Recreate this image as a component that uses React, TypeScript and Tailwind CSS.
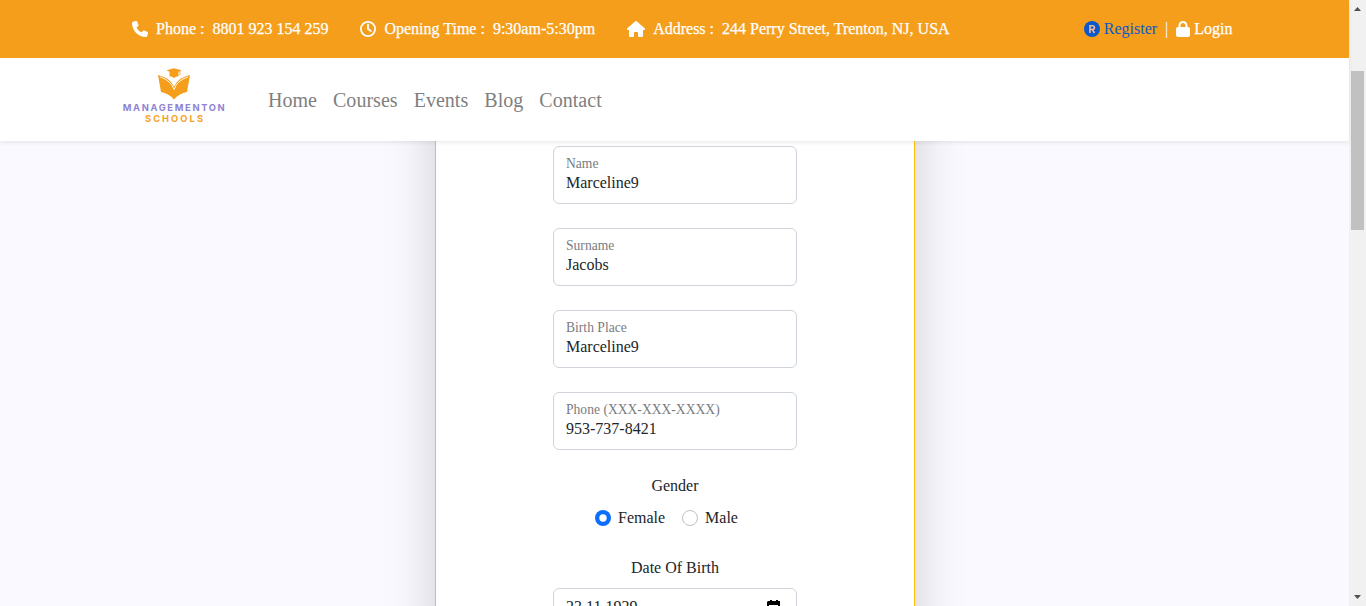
import { FaPhone, FaHouse, FaLock } from "react-icons/fa6";

function ClockIcon({ className }: { className?: string }) {
  return (
    <svg className={className} viewBox="0 0 16 16" fill="none" stroke="currentColor" strokeWidth="1.8">
      <circle cx="8" cy="8" r="7.1" />
      <path d="M8 3.600V8l2.800 1.900" strokeLinecap="round" strokeLinejoin="round" />
    </svg>
  );
}

function RegisterIcon() {
  return (
    <svg width="16" height="16" viewBox="0 0 16 16" fill="none">
      <circle cx="8" cy="8" r="8" fill="currentColor" />
      <path d="M6 12V4.700h2.500a1.900 1.900 0 0 1 0 3.800H6M8.400 8.500l2 3.500" stroke="#f3b9a0" strokeWidth="1.6" />
    </svg>
  );
}

const contacts = [
  { icon: FaPhone, label: "Phone :", value: "8801 923 154 259", box: "w-4" },
  { icon: ClockIcon, label: "Opening Time :", value: "9:30am-5:30pm", box: "w-4" },
  { icon: FaHouse, label: "Address :", value: "244 Perry Street, Trenton, NJ, USA", box: "w-[18px]" },
];

const links = ["Home", "Courses", "Events", "Blog", "Contact"];

const fields = [
  { label: "Name", value: "Marceline9" },
  { label: "Surname", value: "Jacobs" },
  { label: "Birth Place", value: "Marceline9" },
  { label: "Phone (XXX-XXX-XXXX)", value: "953-737-8421" },
];

function Logo() {
  return (
    <svg width="104" height="58" viewBox="0 0 104 58" aria-label="Managementon Schools">
      <g fill="#f59e1c">
        <path d="M52 0.200 L59.500 2.300 L58.300 3 V7.500 H57.500 V3.300 L56.500 3.700 V8.300 Q54 8.300 52 10 Q50 8.300 47.500 8.300 V3.700 L44.500 2.300 Z" />
        <path d="M36 7 Q48 9.500 52 18.500 Q56 9.500 68 7 L65 24 Q57 25.500 52 31.500 Q47 25.500 39 24 Z" />
      </g>
      <path d="M38 8.800 Q49 12.500 52 21.500 Q55 12.500 66 8.800" fill="none" stroke="#fff" strokeWidth="0.900" />
      <text x="0.700" y="43" textLength="102" fill="#8f83d4" fontSize="9.300" fontWeight="700" fontFamily="Inter, sans-serif">MANAGEMENTON</text>
      <text x="23" y="54" textLength="58" fill="#f5a32a" fontSize="9.300" fontWeight="700" fontFamily="Inter, sans-serif">SCHOOLS</text>
    </svg>
  );
}

function TopBar() {
  return (
    <div className="flex h-[58px] items-center justify-between bg-[#f59e1c] pr-[116.5px] pl-[132px] text-white">
      <div className="flex gap-8">
        {contacts.map(({ icon: Icon, label, value, box }) => (
          <div key={label} className="flex items-center">
            <span className={`${box} mr-2 flex justify-center`}>
              <Icon className="h-4 w-full" />
            </span>
            <span className="mr-2 [-webkit-text-stroke:0.25px_white]">{label}</span>
            <span className="[-webkit-text-stroke:0.25px_white]">{value}</span>
          </div>
        ))}
      </div>
      <div className="flex items-center">
        <a className="flex items-center gap-1 text-[#0a58ca]"><RegisterIcon />Register</a>
        <span className="mx-2">|</span>
        <a className="flex items-center gap-1 [-webkit-text-stroke:0.25px_white]"><FaLock className="h-4 w-3.5" />Login</a>
      </div>
    </div>
  );
}

function NavBar() {
  return (
    <nav className="flex h-[83px] items-center bg-white pl-[122px]">
      <div className="-mt-[5px]"><Logo /></div>
      <ul className="ml-[34px] flex text-xl text-[#7f7f7f]">
        {links.map((link) => (
          <li key={link} className="px-2 tracking-[0.03px]">{link}</li>
        ))}
      </ul>
    </nav>
  );
}

function Field({ label, value }: { label: string; value: string }) {
  return (
    <div className="mb-6 h-[58px] rounded-md border border-[#ced4da] bg-white px-3 pt-[7px]">
      <div className="text-[13.6px] leading-5 text-[#797c7f]">{label}</div>
      <div className="-mt-px leading-5">{value}</div>
    </div>
  );
}

function Radio({ checked }: { checked?: boolean }) {
  return (
    <svg width="16" height="16" viewBox="0 0 16 16">
      {checked ? (
        <>
          <circle cx="8" cy="8" r="8" fill="#0d6efd" />
          <circle cx="8" cy="8" r="3.700" fill="#fff" />
        </>
      ) : (
        <circle cx="8" cy="8" r="7.500" fill="#fff" stroke="#bfbfbf" />
      )}
    </svg>
  );
}

function ScrollBar() {
  return (
    <div className="flex w-[17px] shrink-0 flex-col items-center justify-between bg-[#f1f1f1]">
      <svg width="17" height="17" viewBox="0 0 17 17"><path d="M5 11h7l-3.500-4z" fill="#505050" /></svg>
      <div className="mt-[54px] mb-auto h-[159px] w-[13px] bg-[#c1c1c1]" />
      <svg width="17" height="17" viewBox="0 0 17 17"><path d="M5 6h7l-3.500 4z" fill="#505050" /></svg>
    </div>
  );
}

export default function App() {
  return (
    <div className="flex h-[606px] w-[1366px] overflow-hidden font-['Liberation_Serif',serif] text-base text-[#212529]">
      <div className="flex min-w-0 flex-1 flex-col">
        <header className="relative z-10 shadow-[0_2px_4px_rgba(0,0,0,0.075)]">
          <TopBar />
          <NavBar />
        </header>
        <main className="min-h-0 flex-1 overflow-hidden bg-[#faf9ff]">
          <section className="-mt-24 ml-[435px] h-[700px] w-[480px] border border-[#ffc107] bg-white px-[117px] pt-[100px] shadow-[0_16px_48px_rgba(0,0,0,0.175)]">
            {fields.map((field) => (
              <Field key={field.label} {...field} />
            ))}
            <div className="text-center">Gender</div>
            <div className="mt-2 flex pl-[42px]">
              <label className="mr-[17px] flex items-center gap-[7px]">
                <Radio checked />
                Female
              </label>
              <label className="flex items-center gap-[7px]">
                <Radio />
                Male
              </label>
            </div>
            <div className="mt-[26px] text-center">Date Of Birth</div>
            <div className="mt-2 flex h-[38px] items-start justify-between rounded-md border border-[#ced4da] px-3 pt-1.5">
              <span>23.11.1929</span>
              <svg className="mt-1" width="20" height="20" viewBox="0 0 20 20"><path d="M4 2h2V1h2v1h4V1h2v1h2v14H3V3zM5 6v8h9V6z" fill="#000" /></svg>
            </div>
          </section>
        </main>
      </div>
      <ScrollBar />
    </div>
  );
}
